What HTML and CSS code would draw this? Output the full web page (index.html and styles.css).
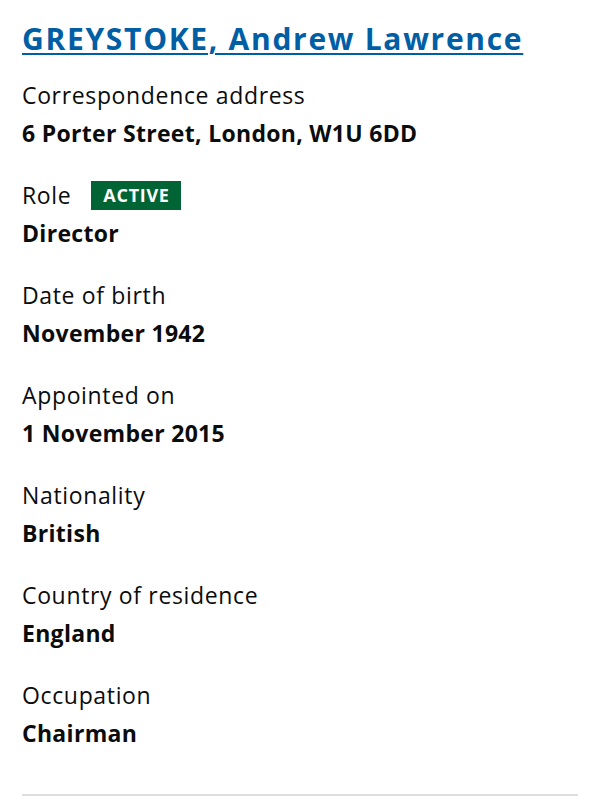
FILE: index.html
```html
<!DOCTYPE html>
<html lang="en">
<head>
<meta charset="utf-8">
<link rel="stylesheet" href="styles.css">
</head>
<body>
<div class="appointment">
  <h1 class="name"><a href="#">GREYSTOKE, Andrew Lawrence</a></h1>
  <dl class="details">
    <div class="item">
      <dt>Correspondence address</dt>
      <dd>6 Porter Street, London, W1U 6DD</dd>
    </div>
    <div class="item">
      <dt>Role <span class="badge">ACTIVE</span></dt>
      <dd>Director</dd>
    </div>
    <div class="item">
      <dt>Date of birth</dt>
      <dd>November 1942</dd>
    </div>
    <div class="item">
      <dt>Appointed on</dt>
      <dd>1 November 2015</dd>
    </div>
    <div class="item">
      <dt>Nationality</dt>
      <dd>British</dd>
    </div>
    <div class="item">
      <dt>Country of residence</dt>
      <dd>England</dd>
    </div>
    <div class="item">
      <dt>Occupation</dt>
      <dd>Chairman</dd>
    </div>
  </dl>
  <hr class="divider">
</div>
</body>
</html>
```

FILE: styles.css
```css
html, body {
  margin: 0;
  padding: 0;
  background: #ffffff;
}
body {
  font-family: "Open Sans", Lato, sans-serif;
  color: #0b0c0c;
}
.appointment {
  padding: 19px 22px 0 22px;
}
.name {
  margin: 0 0 17px 0;
  font-size: 30px;
  line-height: 40px;
  font-weight: 700;
  letter-spacing: 1.7px;
}
.name a {
  color: #005ea5;
  text-decoration: underline;
  text-decoration-thickness: 2px;
  text-underline-offset: 3px;
}
.details {
  margin: 0;
  display: flex;
  flex-direction: column;
  gap: 24px;
}
.item dt {
  font-size: 23px;
  line-height: 38px;
  letter-spacing: 0.65px;
  display: flex;
  align-items: center;
  gap: 20px;
}
.item dd {
  margin: 0;
  padding-top: 1px;
  font-size: 23px;
  line-height: 37px;
  font-weight: 700;
  letter-spacing: 0.3px;
}
.badge {
  display: inline-block;
  background: #006435;
  color: #fff;
  font-size: 18px;
  font-weight: 700;
  letter-spacing: 0.7px;
  line-height: 29px;
  padding: 0 11px 0 12px;
}
.divider {
  margin: 42px 0 0 0;
  border: 0;
  border-top: 2px solid #dedede;
}
```
